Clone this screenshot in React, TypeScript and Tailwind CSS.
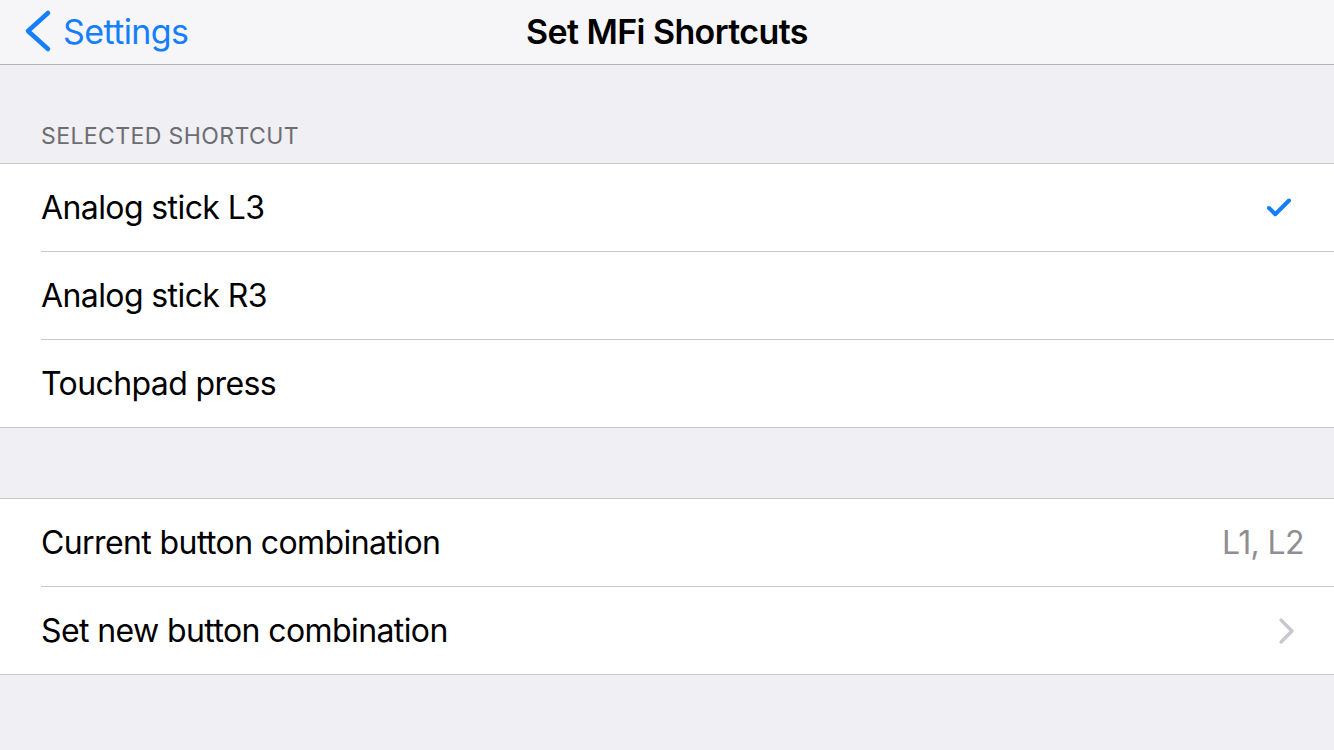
import { Check } from 'lucide-react'

const font = { fontFamily: 'Inter, "Noto Sans", sans-serif' }

function Row({
  label,
  last,
  right,
}: {
  label: string
  last?: boolean
  right?: React.ReactNode
}) {
  return (
    <div className="pl-[41px]">
      <div
        className={`flex items-center justify-between pr-[40px] ${
          last ? 'h-[87px]' : 'h-[88px] border-b border-[#c8c7cc]'
        }`}
      >
        <span className="text-[32px] tracking-[-0.6px] text-black">{label}</span>
        {right}
      </div>
    </div>
  )
}

export default function App() {
  return (
    <div className="w-[1334px] h-[750px] bg-[#efeff4] overflow-hidden" style={font}>
      {/* Nav bar */}
      <div className="h-[65px] bg-[#f6f6f8] border-b border-[#b2b2b2] relative flex items-center justify-center">
        <div className="absolute left-[22px] top-0 h-full flex items-center text-[#147efb] pb-[2px]">
          <svg width="30" height="44" viewBox="0 0 30 44" fill="none">
            <polyline
              points="26,4 6,22 26,40"
              stroke="currentColor"
              strokeWidth="4.5"
              strokeLinecap="round"
              strokeLinejoin="round"
            />
          </svg>
          <span className="text-[34px] tracking-[-0.6px] ml-[11px]">Settings</span>
        </div>
        <span className="text-[34px] font-semibold tracking-[-0.6px] text-black pb-[2px]">
          Set MFi Shortcuts
        </span>
      </div>

      {/* Section header */}
      <div className="h-[98px] flex items-end pl-[41px] pb-[10px]">
        <span className="text-[23px] text-[#6d6d72] uppercase tracking-[0.4px]">
          Selected Shortcut
        </span>
      </div>

      {/* Group 1 */}
      <div className="bg-white border-y border-[#c8c7cc]">
        <Row
          label="Analog stick L3"
          right={<Check className="w-[30px] h-[30px] text-[#147efb]" strokeWidth={3.2} />}
        />
        <Row label="Analog stick R3" />
        <Row label="Touchpad press" last />
      </div>

      <div className="h-[70px]" />

      {/* Group 2 */}
      <div className="bg-white border-y border-[#c8c7cc]">
        <Row
          label="Current button combination"
          right={
            <span className="text-[32px] tracking-[-0.6px] text-[#8e8e93] -mr-[10px]">
              L1, L2
            </span>
          }
        />
        <Row
          label="Set new button combination"
          last
          right={
            <svg width="18" height="28" viewBox="0 0 18 28" fill="none" className="-mr-[2px]">
              <polyline
                points="3,3 14,14 3,25"
                stroke="#c7c7cc"
                strokeWidth="3.2"
                strokeLinecap="round"
                strokeLinejoin="round"
              />
            </svg>
          }
        />
      </div>
    </div>
  )
}
